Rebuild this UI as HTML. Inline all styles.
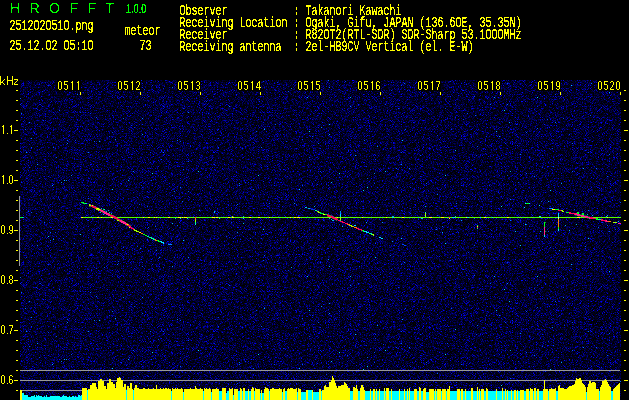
<!DOCTYPE html>
<html><head><meta charset="utf-8"><title>HROFFT</title>
<style>
html,body{margin:0;padding:0;background:#000;}
body{width:629px;height:400px;overflow:hidden;position:relative;font-family:"Liberation Mono",monospace;}
.m{position:absolute;font-family:"Liberation Mono",monospace;font-size:10px;line-height:10px;height:10px;white-space:pre;transform-origin:0 0;transform:translate(-0.5px,-1.4px) scaleY(1.48);letter-spacing:0;font-weight:normal;-webkit-text-stroke:0.1px #ff0}
.p{position:absolute;font-family:"Liberation Sans",sans-serif;font-size:12px;line-height:12px;height:12px;white-space:pre;transform-origin:0 0;transform:scaleX(0.82);-webkit-text-stroke:0.3px #ff0}
.h{position:absolute;font-family:"Liberation Sans",sans-serif;color:#0f0;white-space:pre}
span.b{-webkit-text-stroke:0.15px #ff0}
#hdr{position:absolute;left:0;top:0;width:629px;height:60px;filter:url(#thr)}
#sp{position:absolute;left:20px;top:80px;width:601px;height:320px;background:#000;overflow:hidden}
svg{position:absolute;left:0;top:0}
</style></head><body>

<svg width="0" height="0" style="position:absolute"><filter id="thr" x="0" y="0" width="100%" height="100%" color-interpolation-filters="sRGB"><feComponentTransfer><feFuncA type="discrete" tableValues="0 0 0 0 0 0 0 0 0 0 1 1 1 1 1 1 1 1 1 1"/></feComponentTransfer></filter></svg>
<div id="hdr">
<div class="h" style="left:10px;top:0px;font-size:14px;line-height:16px;letter-spacing:9.45px">HROFFT</div>
<div class="h" style="left:126px;top:3px;font-size:12px;line-height:12px;-webkit-text-stroke:0.3px #0f0;transform-origin:0 0;transform:scaleX(0.76)">1.0.0</div>
<div class="m" style="left:10px;top:21px;color:#ff0">2512O2O51O.png</div>
<div class="m" style="left:10px;top:41px;color:#ff0">25.12.O2&nbsp;O5:1O</div>
<div class="m" style="left:125px;top:26px;color:#ff0"><span class="b">m</span>eteor</div>
<div class="m" style="left:140px;top:41px;color:#ff0">73</div>
<div class="m" style="left:180px;top:6px;color:#ff0">Observer&nbsp;&nbsp;&nbsp;&nbsp;&nbsp;&nbsp;&nbsp;&nbsp;&nbsp;&nbsp;&nbsp;:&nbsp;Takanori&nbsp;Ka<span class="b">w</span>achi</div>
<div class="m" style="left:180px;top:18px;color:#ff0">Receiving&nbsp;Location&nbsp;:&nbsp;Ogaki,&nbsp;Gifu,&nbsp;JAPAN&nbsp;(136.6OE,&nbsp;35.35N)</div>
<div class="m" style="left:180px;top:30px;color:#ff0">Receiver&nbsp;&nbsp;&nbsp;&nbsp;&nbsp;&nbsp;&nbsp;&nbsp;&nbsp;&nbsp;&nbsp;:&nbsp;R82OT2(RTL-SDR)&nbsp;SDR-Sharp&nbsp;53.1OOO<span class="b">M</span>Hz</div>
<div class="m" style="left:180px;top:42px;color:#ff0">Receiving&nbsp;antenna&nbsp;&nbsp;:&nbsp;2el-HB9CV&nbsp;Vertical&nbsp;(el.&nbsp;E-<span class="b">W</span>)</div>
</div>
<div id="sp"><svg width="601" height="320" style="position:absolute;left:0;top:0">
<filter id="nz" x="0" y="0" width="100%" height="100%" color-interpolation-filters="sRGB">
<feTurbulence type="fractalNoise" baseFrequency="1.37 1.43" numOctaves="2" seed="7"/>
<feColorMatrix type="matrix" values="0 0 0 0 0  1 0 0 0 0  1 0 0 0 0  0 0 0 0 1"/>
<feComponentTransfer>
<feFuncG type="table" tableValues="0 0 0 0 0 0 0 0 0 0 0 0 0 0 0 0 0 0 0 0 0 0 0 0 0 0 0 0 0 0 0 0 0 0 0 0 0 0 0 0 0.07 0.25 0.42 0.6 0.78 0.85 0.85 0.85 0.85 0.85 0.85 0.85"/>
<feFuncB type="table" tableValues="0 0 0 0 0 0 0 0 0 0 0 0 0 0 0 0 0 0 0 0.01 0.01 0.02 0.04 0.06 0.08 0.11 0.14 0.18 0.22 0.27 0.32 0.38 0.45 0.52 0.61 0.69 0.79 0.89 1 1 1 1 1 1 1 1 1 1 1 1 1 1"/>
</feComponentTransfer>
</filter>
<rect x="0" y="0" width="601" height="320" filter="url(#nz)"/>
</svg></div>
<svg width="629" height="400" viewBox="0 0 629 400" shape-rendering="crispEdges">
<rect x="20" y="370" width="600" height="1" fill="#999"/>
<rect x="20" y="380" width="600" height="1" fill="#999"/>
<rect x="20" y="390" width="62" height="1" fill="#999"/>
<rect x="19" y="196" width="1" height="70" fill="#999"/>
<path fill="#ff0" d="M20 390h2V400h-2zM82 388h5V400h-5zM88 389h2V400h-2zM90 385h2V400h-2zM92 383h4V400h-4zM96 387h1V400h-1zM97 389h1V400h-1zM98 381h2V400h-2zM100 379h2V400h-2zM102 381h2V400h-2zM104 386h2V400h-2zM106 389h1V400h-1zM107 383h2V400h-2zM109 379h2V400h-2zM111 382h2V400h-2zM113 384h2V400h-2zM115 388h1V400h-1zM116 382h1V400h-1zM117 378h2V400h-2zM119 377h1V400h-1zM120 378h1V400h-1zM121 380h2V400h-2zM123 387h1V400h-1zM124 384h2V400h-2zM127 386h2V400h-2zM129 388h1V400h-1zM130 383h2V400h-2zM132 389h1V400h-1zM134 388h1V400h-1zM135 385h2V400h-2zM137 388h2V400h-2zM139 389h4V400h-4zM143 388h2V400h-2zM145 389h3V400h-3zM148 388h1V400h-1zM149 389h4V400h-4zM153 388h1V400h-1zM154 389h2V400h-2zM156 385h1V400h-1zM157 389h3V400h-3zM160 388h1V400h-1zM161 389h2V400h-2zM163 388h1V400h-1zM164 389h1V400h-1zM165 388h2V400h-2zM167 389h1V400h-1zM168 388h1V400h-1zM169 389h2V400h-2zM172 388h1V400h-1zM173 389h2V400h-2zM175 388h1V400h-1zM176 389h1V400h-1zM177 388h1V400h-1zM178 389h3V400h-3zM181 388h1V400h-1zM182 389h1V400h-1zM184 389h6V400h-6zM190 388h1V400h-1zM191 389h4V400h-4zM195 386h1V400h-1zM196 388h1V400h-1zM197 389h3V400h-3zM200 388h1V400h-1zM201 389h2V400h-2zM204 388h1V400h-1zM205 389h1V400h-1zM206 388h1V400h-1zM207 389h2V400h-2zM209 388h1V400h-1zM210 389h1V400h-1zM212 389h4V400h-4zM216 388h1V400h-1zM217 389h2V400h-2zM222 388h4V400h-4zM229 388h1V400h-1zM230 389h2V400h-2zM232 388h1V400h-1zM234 389h4V400h-4zM240 388h1V400h-1zM241 389h1V400h-1zM243 388h2V400h-2zM248 389h1V400h-1zM251 389h1V400h-1zM252 387h1V400h-1zM253 388h1V400h-1zM255 388h1V400h-1zM256 389h4V400h-4zM261 390h1V400h-1zM264 389h1V400h-1zM265 387h1V400h-1zM266 388h2V400h-2zM268 389h1V400h-1zM270 389h2V400h-2zM272 388h2V400h-2zM274 389h5V400h-5zM279 388h1V400h-1zM280 389h2V400h-2zM283 389h1V400h-1zM284 388h1V400h-1zM287 389h1V400h-1zM288 388h1V400h-1zM289 389h1V400h-1zM290 388h3V400h-3zM293 389h3V400h-3zM296 388h1V400h-1zM298 388h1V400h-1zM299 389h2V400h-2zM306 390h2V400h-2zM312 390h1V400h-1zM319 389h2V400h-2zM322 390h2V400h-2zM324 386h1V400h-1zM325 385h1V400h-1zM326 387h3V400h-3zM329 382h2V400h-2zM331 380h1V400h-1zM332 376h1V400h-1zM333 378h1V400h-1zM334 380h1V400h-1zM335 383h1V400h-1zM336 386h1V400h-1zM337 388h1V400h-1zM338 386h3V400h-3zM341 385h3V400h-3zM344 382h1V400h-1zM345 383h1V400h-1zM346 384h1V400h-1zM347 386h1V400h-1zM348 388h2V400h-2zM353 387h2V400h-2zM355 388h1V400h-1zM356 385h1V400h-1zM357 389h1V400h-1zM360 388h1V400h-1zM361 385h2V400h-2zM363 387h1V400h-1zM364 390h1V400h-1zM370 389h1V400h-1zM373 389h2V400h-2zM376 389h1V400h-1zM379 389h1V400h-1zM384 388h1V400h-1zM386 388h3V400h-3zM391 389h1V400h-1zM399 389h1V400h-1zM404 389h1V400h-1zM407 389h1V400h-1zM409 388h1V400h-1zM414 389h3V400h-3zM419 387h1V400h-1zM420 388h1V400h-1zM423 389h1V400h-1zM424 388h2V400h-2zM429 389h5V400h-5zM435 389h1V400h-1zM437 389h4V400h-4zM442 389h4V400h-4zM447 389h2V400h-2zM449 386h1V400h-1zM457 389h3V400h-3zM461 389h2V400h-2zM465 389h1V400h-1zM471 388h2V400h-2zM477 387h1V400h-1zM479 389h1V400h-1zM481 389h3V400h-3zM486 388h1V400h-1zM487 389h1V400h-1zM496 389h1V400h-1zM502 388h1V400h-1zM505 389h1V400h-1zM507 390h1V400h-1zM511 390h1V400h-1zM514 390h2V400h-2zM517 390h1V400h-1zM520 390h4V400h-4zM526 389h3V400h-3zM530 388h1V400h-1zM531 389h2V400h-2zM534 388h2V400h-2zM537 389h2V400h-2zM543 389h1V400h-1zM544 380h1V400h-1zM545 389h3V400h-3zM549 389h2V400h-2zM551 388h1V400h-1zM552 389h3V400h-3zM555 388h1V400h-1zM558 386h1V400h-1zM559 385h1V400h-1zM560 388h4V400h-4zM564 389h3V400h-3zM567 388h1V400h-1zM568 387h1V400h-1zM569 386h3V400h-3zM572 385h2V400h-2zM574 384h1V400h-1zM575 381h1V400h-1zM576 378h1V400h-1zM577 379h2V400h-2zM579 378h2V400h-2zM581 380h1V400h-1zM582 383h1V400h-1zM583 384h1V400h-1zM584 385h1V400h-1zM585 387h1V400h-1zM587 387h1V400h-1zM588 384h1V400h-1zM589 381h2V400h-2zM591 383h1V400h-1zM592 382h3V400h-3zM595 383h1V400h-1zM596 389h3V400h-3zM600 387h1V400h-1zM601 385h1V400h-1zM602 381h2V400h-2zM604 380h1V400h-1zM605 379h1V400h-1zM606 380h1V400h-1zM607 382h1V400h-1zM608 384h1V400h-1zM609 386h1V400h-1zM610 387h1V400h-1zM613 389h1V400h-1zM614 388h1V400h-1zM615 387h1V400h-1zM616 386h1V400h-1zM617 385h1V400h-1zM618 384h1V400h-1zM619 383h1V400h-1z"/>
<path fill="#0ff" d="M22 393h2V400h-2zM24 395h4V400h-4zM28 397h3V400h-3zM31 396h3V400h-3zM34 395h1V400h-1zM35 397h1V400h-1zM36 395h1V400h-1zM37 396h1V400h-1zM38 395h1V400h-1zM39 396h3V400h-3zM42 397h2V400h-2zM44 396h1V400h-1zM45 397h1V400h-1zM46 395h1V400h-1zM47 397h3V400h-3zM50 396h10V400h-10zM60 397h2V400h-2zM62 396h1V400h-1zM63 395h1V400h-1zM64 396h3V400h-3zM67 397h2V400h-2zM69 396h1V400h-1zM70 397h2V400h-2zM72 396h2V400h-2zM74 397h1V400h-1zM75 396h1V400h-1zM76 397h2V400h-2zM78 395h2V400h-2zM80 396h1V400h-1zM81 395h1V400h-1zM87 390h1V400h-1zM126 390h1V400h-1zM133 390h1V400h-1zM171 391h1V400h-1zM183 392h1V400h-1zM203 391h1V400h-1zM211 392h1V400h-1zM219 391h3V400h-3zM226 393h1V400h-1zM227 391h2V400h-2zM233 395h1V400h-1zM238 391h2V400h-2zM242 391h1V400h-1zM245 391h3V400h-3zM249 391h2V400h-2zM254 391h1V400h-1zM260 393h1V400h-1zM262 393h2V400h-2zM269 391h1V400h-1zM282 392h1V400h-1zM285 391h2V400h-2zM297 392h1V400h-1zM301 392h5V400h-5zM308 390h4V400h-4zM313 392h6V400h-6zM321 391h1V400h-1zM350 391h3V400h-3zM358 391h2V400h-2zM365 391h5V400h-5zM371 391h2V400h-2zM375 391h1V400h-1zM377 391h2V400h-2zM380 391h4V400h-4zM385 391h1V400h-1zM389 391h2V400h-2zM392 391h7V400h-7zM400 391h4V400h-4zM405 391h2V400h-2zM408 391h1V400h-1zM410 391h4V400h-4zM417 391h2V400h-2zM421 391h2V400h-2zM426 392h3V400h-3zM434 391h1V400h-1zM436 391h1V400h-1zM441 391h1V400h-1zM446 391h1V400h-1zM450 391h7V400h-7zM460 391h1V400h-1zM463 391h2V400h-2zM466 391h5V400h-5zM473 391h4V400h-4zM478 391h1V400h-1zM480 391h1V400h-1zM484 391h2V400h-2zM488 391h8V400h-8zM497 391h5V400h-5zM503 391h2V400h-2zM506 391h1V400h-1zM508 391h3V400h-3zM512 391h2V400h-2zM516 391h1V400h-1zM518 391h2V400h-2zM524 391h2V400h-2zM529 391h1V400h-1zM533 391h1V400h-1zM536 391h1V400h-1zM539 391h4V400h-4zM548 391h1V400h-1zM556 391h2V400h-2zM586 392h1V400h-1zM599 391h1V400h-1zM611 391h2V400h-2z"/>
<rect x="81" y="217" width="540" height="1" fill="#58ff00"/>
<rect x="97" y="217" width="2" height="1" fill="#ffff00"/>
<rect x="101" y="217" width="1" height="1" fill="#ffff00"/>
<rect x="111" y="217" width="2" height="1" fill="#ffff00"/>
<rect x="134" y="217" width="1" height="1" fill="#30ff10"/>
<rect x="138" y="217" width="2" height="1" fill="#30ff10"/>
<rect x="143" y="217" width="1" height="1" fill="#ffff00"/>
<rect x="148" y="217" width="2" height="1" fill="#ffff00"/>
<rect x="154" y="217" width="1" height="1" fill="#ffff00"/>
<rect x="156" y="217" width="1" height="1" fill="#ffff00"/>
<rect x="161" y="217" width="3" height="1" fill="#30ff10"/>
<rect x="168" y="217" width="2" height="1" fill="#ffff00"/>
<rect x="173" y="217" width="2" height="1" fill="#30ff10"/>
<rect x="178" y="217" width="3" height="1" fill="#ffff00"/>
<rect x="182" y="217" width="1" height="1" fill="#ffff00"/>
<rect x="184" y="217" width="3" height="1" fill="#ffff00"/>
<rect x="206" y="217" width="2" height="1" fill="#30ff10"/>
<rect x="209" y="217" width="2" height="1" fill="#30ff10"/>
<rect x="212" y="217" width="3" height="1" fill="#ffff00"/>
<rect x="216" y="217" width="2" height="1" fill="#ffff00"/>
<rect x="220" y="217" width="1" height="1" fill="#30ff10"/>
<rect x="228" y="217" width="2" height="1" fill="#ffff00"/>
<rect x="232" y="217" width="2" height="1" fill="#ffff00"/>
<rect x="249" y="217" width="2" height="1" fill="#ffff00"/>
<rect x="258" y="217" width="2" height="1" fill="#ffff00"/>
<rect x="269" y="217" width="1" height="1" fill="#ffff00"/>
<rect x="281" y="217" width="3" height="1" fill="#30ff10"/>
<rect x="290" y="217" width="1" height="1" fill="#ffff00"/>
<rect x="294" y="217" width="2" height="1" fill="#ffff00"/>
<rect x="297" y="217" width="3" height="1" fill="#ffff00"/>
<rect x="304" y="217" width="1" height="1" fill="#30ff10"/>
<rect x="307" y="217" width="2" height="1" fill="#30ff10"/>
<rect x="310" y="217" width="3" height="1" fill="#30ff10"/>
<rect x="332" y="217" width="2" height="1" fill="#ffff00"/>
<rect x="337" y="217" width="1" height="1" fill="#ffff00"/>
<rect x="347" y="217" width="3" height="1" fill="#30ff10"/>
<rect x="360" y="217" width="1" height="1" fill="#30ff10"/>
<rect x="362" y="217" width="1" height="1" fill="#ffff00"/>
<rect x="381" y="217" width="1" height="1" fill="#30ff10"/>
<rect x="386" y="217" width="1" height="1" fill="#ffff00"/>
<rect x="402" y="217" width="2" height="1" fill="#ffff00"/>
<rect x="417" y="217" width="2" height="1" fill="#30ff10"/>
<rect x="425" y="217" width="2" height="1" fill="#30ff10"/>
<rect x="429" y="217" width="3" height="1" fill="#ffff00"/>
<rect x="441" y="217" width="3" height="1" fill="#ffff00"/>
<rect x="466" y="217" width="1" height="1" fill="#ffff00"/>
<rect x="484" y="217" width="2" height="1" fill="#ffff00"/>
<rect x="490" y="217" width="2" height="1" fill="#30ff10"/>
<rect x="499" y="217" width="1" height="1" fill="#30ff10"/>
<rect x="507" y="217" width="2" height="1" fill="#ffff00"/>
<rect x="511" y="217" width="2" height="1" fill="#30ff10"/>
<rect x="514" y="217" width="3" height="1" fill="#30ff10"/>
<rect x="522" y="217" width="2" height="1" fill="#30ff10"/>
<rect x="528" y="217" width="2" height="1" fill="#30ff10"/>
<rect x="534" y="217" width="3" height="1" fill="#30ff10"/>
<rect x="552" y="217" width="3" height="1" fill="#30ff10"/>
<rect x="577" y="217" width="3" height="1" fill="#ffff00"/>
<rect x="587" y="217" width="2" height="1" fill="#30ff10"/>
<rect x="607" y="217" width="1" height="1" fill="#ffff00"/>
<rect x="81" y="217" width="2" height="1" fill="#ffff00"/>
<path d="M81.0 202.5 L84.0 203.0 L86.0 203.6" stroke="#00ff20" stroke-width="1.2" fill="none"/>
<rect x="85" y="203" width="2" height="1" fill="#00ff90"/>
<path d="M89.0 205.0 L93.0 206.5 L98.0 209.0 L103.0 211.5 L107.5 214.0 L112.0 216.0 L117.0 218.5 L121.0 221.0 L125.5 223.5 L130.5 226.8" stroke="#a0ff00" stroke-width="2.6" stroke-opacity="0.4" fill="none"/>
<path d="M89.0 205.0 L93.0 206.5 L98.0 209.0 L103.0 211.5 L107.5 214.0 L112.0 216.0 L117.0 218.5 L121.0 221.0 L125.5 223.5 L130.5 226.8" stroke="#ff0058" stroke-width="1.5" fill="none"/>
<path d="M100.0 210.0 L103.0 211.5 L107.5 214.0 L110.0 215.1" stroke="#ff2090" stroke-width="2.2" fill="none"/>
<path d="M120.0 220.5 L121.0 221.0 L125.5 223.5 L126.5 224.2" stroke="#ff2090" stroke-width="2.2" fill="none"/>
<path d="M96.0 208.7 L99.0 210.2" stroke="#a0ff00" stroke-width="1.0" fill="none"/>
<path d="M97.5 208.2 L100.0 209.4" stroke="#ffff00" stroke-width="1.0" fill="none"/>
<path d="M89.0 204.8 L91.0 205.6" stroke="#a0ff00" stroke-width="1.2" fill="none"/>
<rect x="103" y="209" width="2" height="1" fill="#00ff20"/>
<rect x="92" y="205" width="1" height="1" fill="#ffff00"/>
<path d="M117.0 220.0 L119.5 221.4" stroke="#a0ff00" stroke-width="1.0" fill="none"/>
<path d="M126.5 224.0 L128.5 225.2" stroke="#ff8000" stroke-width="1.3" fill="none"/>
<rect x="127" y="224" width="1" height="1" fill="#ffff00"/>
<rect x="129" y="227" width="1" height="1" fill="#ffff00"/>
<path d="M130.5 226.8 L133.8 229.5" stroke="#ff0058" stroke-width="1.4" fill="none"/>
<rect x="135" y="230" width="1" height="1" fill="#00e0ff"/>
<path d="M134.0 229.8 L135.5 230.5 L138.5 231.7" stroke="#a0ff00" stroke-width="1.2" fill="none"/>
<path d="M138.5 231.7 L141.0 233.0" stroke="#ffff00" stroke-width="1.2" fill="none"/>
<path d="M141.0 233.0 L143.5 234.3" stroke="#ff8000" stroke-width="1.2" fill="none"/>
<path d="M143.5 234.3 L147.0 236.0" stroke="#00ff20" stroke-width="1.2" fill="none"/>
<path d="M147.0 236.0 L152.0 238.4 L155.0 239.7" stroke="#00ff90" stroke-width="1.2" fill="none"/>
<path d="M155.0 239.7 L157.0 240.5" stroke="#ff8000" stroke-width="1.2" fill="none"/>
<path d="M157.0 240.5 L160.4 241.4" stroke="#00ff20" stroke-width="1.2" fill="none"/>
<path d="M160.4 241.4 L164.5 243.3" stroke="#00e0ff" stroke-width="1.2" fill="none"/>
<path d="M168.0 244.5 L172.0 244.6" stroke="#0088ff" stroke-width="1.0" fill="none"/>
<rect x="101" y="208" width="1" height="1" fill="#00e0ff" fill-opacity="0.8"/>
<rect x="104" y="209" width="1" height="1" fill="#00e0ff" fill-opacity="0.8"/>
<rect x="106" y="211" width="1" height="1" fill="#00e0ff" fill-opacity="0.8"/>
<rect x="108" y="210" width="1" height="1" fill="#00e0ff" fill-opacity="0.8"/>
<rect x="109" y="212" width="1" height="1" fill="#00e0ff" fill-opacity="0.8"/>
<rect x="100" y="212" width="1" height="1" fill="#00e0ff" fill-opacity="0.8"/>
<rect x="103" y="214" width="1" height="1" fill="#00e0ff" fill-opacity="0.8"/>
<rect x="111" y="213" width="1" height="1" fill="#00e0ff" fill-opacity="0.8"/>
<rect x="294" y="203" width="1" height="1" fill="#0088ff"/>
<rect x="305" y="207" width="2" height="1" fill="#00e0ff" fill-opacity="0.9"/>
<rect x="308" y="208" width="2" height="1" fill="#00e0ff" fill-opacity="0.8"/>
<path d="M310.0 208.7 L314.6 209.8" stroke="#0040ff" stroke-width="1.0" stroke-opacity="0.8" fill="none"/>
<path d="M314.6 209.8 L317.5 211.2" stroke="#00ff90" stroke-width="1.2" fill="none"/>
<path d="M317.5 211.2 L320.0 212.9" stroke="#a0ff00" stroke-width="1.2" fill="none"/>
<path d="M320.0 212.9 L324.2 214.1 L327.0 215.0" stroke="#00ff20" stroke-width="1.2" fill="none"/>
<path d="M323.0 213.9 L325.0 214.4" stroke="#ffff00" stroke-width="1.0" fill="none"/>
<path d="M327.0 215.0 L330.8 216.6 L333.7 218.0 L337.5 219.7" stroke="#a0ff00" stroke-width="2.8" stroke-opacity="0.4" fill="none"/>
<path d="M327.0 215.0 L330.8 216.6 L333.7 218.0 L337.5 219.7" stroke="#ff0058" stroke-width="1.7" fill="none"/>
<path d="M337.5 219.7 L342.4 222.0 L347.5 224.0" stroke="#ff0058" stroke-width="1.2" fill="none"/>
<path d="M347.5 224.0 L349.5 225.0" stroke="#ff8000" stroke-width="1.2" fill="none"/>
<path d="M349.5 225.0 L353.0 226.6" stroke="#a0ff00" stroke-width="1.2" fill="none"/>
<rect x="354" y="225" width="2" height="1" fill="#00e0ff"/>
<path d="M353.0 226.6 L356.4 227.9" stroke="#ff8000" stroke-width="1.2" fill="none"/>
<path d="M356.4 227.9 L361.8 230.3" stroke="#ff0058" stroke-width="1.3" fill="none"/>
<path d="M361.8 230.3 L364.5 231.4" stroke="#00ff20" stroke-width="1.2" fill="none"/>
<path d="M364.5 231.4 L369.0 233.0" stroke="#00e0ff" stroke-width="1.2" fill="none"/>
<path d="M369.0 233.0 L372.0 234.3" stroke="#00ff90" stroke-width="1.2" fill="none"/>
<path d="M372.0 234.3 L374.5 235.3" stroke="#a0ff00" stroke-width="1.2" fill="none"/>
<path d="M379.0 237.4 L382.6 238.3" stroke="#00e0ff" stroke-width="1.0" fill="none"/>
<rect x="392" y="241" width="1" height="1" fill="#0088ff"/>
<path d="M402.0 244.4 L406.0 245.4" stroke="#0040ff" stroke-width="1.0" fill="none"/>
<rect x="331" y="219" width="1" height="1" fill="#00e0ff" fill-opacity="0.8"/>
<rect x="332" y="220" width="1" height="1" fill="#00e0ff" fill-opacity="0.8"/>
<rect x="333" y="220" width="1" height="1" fill="#00e0ff" fill-opacity="0.8"/>
<rect x="329" y="218" width="1" height="1" fill="#00e0ff" fill-opacity="0.8"/>
<rect x="340" y="211" width="1" height="3" fill="#0088ff"/>
<rect x="340" y="214" width="1" height="3" fill="#00e0ff"/>
<rect x="340" y="217" width="1" height="3" fill="#a0ff00"/>
<rect x="340" y="220" width="1" height="1" fill="#00ff90"/>
<rect x="392" y="216" width="2" height="2" fill="#00e0ff" fill-opacity="0.8"/>
<rect x="525" y="203" width="1" height="1" fill="#00e0ff"/>
<rect x="526" y="203" width="3" height="1" fill="#00ff20"/>
<rect x="529" y="203" width="1" height="1" fill="#00e0ff"/>
<rect x="524" y="207" width="1" height="1" fill="#00e0ff"/>
<rect x="539" y="205" width="1" height="1" fill="#00e0ff"/>
<rect x="525" y="224" width="1" height="1" fill="#00e0ff"/>
<rect x="539" y="216" width="2" height="1" fill="#00e0ff"/>
<path d="M549.4 208.4 L552.5 208.7" stroke="#0088ff" stroke-width="1.0" fill="none"/>
<path d="M552.5 208.9 L555.0 209.5" stroke="#ffff00" stroke-width="1.2" fill="none"/>
<path d="M555.0 209.5 L558.5 210.0" stroke="#00ff20" stroke-width="1.2" fill="none"/>
<path d="M558.5 210.0 L561.0 210.6" stroke="#ff0058" stroke-width="1.3" fill="none"/>
<path d="M561.0 210.6 L564.0 211.3" stroke="#a0ff00" stroke-width="1.2" fill="none"/>
<path d="M566.0 212.2 L569.0 212.8" stroke="#00ff20" stroke-width="1.2" fill="none"/>
<path d="M575.5 214.1 L578.4 215.0 L582.2 216.0 L586.0 216.8 L589.9 217.8" stroke="#00ff20" stroke-width="3.0" stroke-opacity="0.4" fill="none"/>
<path d="M569.0 212.8 L571.7 213.2 L575.5 214.1" stroke="#ff0058" stroke-width="1.3" fill="none"/>
<path d="M575.5 214.1 L578.4 215.0 L582.2 216.0 L586.0 216.8 L589.9 217.8" stroke="#ff2090" stroke-width="1.8" fill="none"/>
<path d="M589.9 217.8 L593.7 218.4 L595.5 218.8" stroke="#ff0058" stroke-width="1.4" fill="none"/>
<path d="M595.5 218.8 L598.0 219.2" stroke="#00ff20" stroke-width="1.3" fill="none"/>
<path d="M598.0 219.2 L601.0 219.8" stroke="#00ff90" stroke-width="1.3" fill="none"/>
<path d="M601.0 219.8 L606.0 221.0" stroke="#ff0058" stroke-width="1.5" fill="none"/>
<path d="M606.0 221.0 L608.5 221.4" stroke="#ff2090" stroke-width="1.3" fill="none"/>
<path d="M608.5 221.4 L611.0 221.8" stroke="#ff8000" stroke-width="1.2" fill="none"/>
<path d="M613.5 222.3 L616.8 222.8" stroke="#a0ff00" stroke-width="1.3" fill="none"/>
<path d="M618.0 223.5 L621.0 223.7" stroke="#ff2090" stroke-width="1.3" fill="none"/>
<rect x="577" y="212" width="1" height="1" fill="#00e0ff" fill-opacity="0.85"/>
<rect x="578" y="213" width="1" height="1" fill="#00e0ff" fill-opacity="0.85"/>
<rect x="582" y="213" width="1" height="1" fill="#00e0ff" fill-opacity="0.85"/>
<rect x="583" y="214" width="1" height="1" fill="#00e0ff" fill-opacity="0.85"/>
<rect x="606" y="216" width="1" height="1" fill="#00e0ff" fill-opacity="0.85"/>
<rect x="607" y="215" width="1" height="1" fill="#00e0ff" fill-opacity="0.85"/>
<rect x="618" y="221" width="1" height="1" fill="#00e0ff" fill-opacity="0.85"/>
<rect x="592" y="215" width="1" height="1" fill="#00e0ff" fill-opacity="0.85"/>
<rect x="587" y="214" width="1" height="1" fill="#00e0ff" fill-opacity="0.85"/>
<rect x="577" y="212" width="2" height="2" fill="#00ff20"/>
<rect x="582" y="213" width="2" height="2" fill="#00ff20"/>
<rect x="540" y="231" width="1" height="1" fill="#00e0ff" fill-opacity="0.8"/>
<rect x="565" y="225" width="1" height="1" fill="#00e0ff" fill-opacity="0.8"/>
<rect x="569" y="230" width="1" height="1" fill="#00e0ff" fill-opacity="0.8"/>
<rect x="576" y="224" width="1" height="1" fill="#00e0ff" fill-opacity="0.8"/>
<rect x="544" y="222" width="1" height="5" fill="#00ff20"/>
<rect x="544" y="227" width="1" height="8" fill="#ff2090"/>
<rect x="544" y="235" width="1" height="2" fill="#00e0ff"/>
<rect x="545" y="222" width="1" height="1" fill="#00ff20" fill-opacity="0.7"/>
<rect x="545" y="231" width="1" height="1" fill="#00ff20" fill-opacity="0.7"/>
<rect x="558" y="213" width="1" height="4" fill="#00e0ff"/>
<rect x="558" y="217" width="1" height="2" fill="#c0ffc0"/>
<rect x="558" y="219" width="1" height="8" fill="#ff8000"/>
<rect x="558" y="227" width="1" height="2" fill="#00ff20"/>
<rect x="558" y="229" width="1" height="2" fill="#00e0ff"/>
<rect x="195" y="217" width="1" height="1" fill="#ff0058"/>
<rect x="195" y="218" width="1" height="2" fill="#ff8000"/>
<rect x="195" y="220" width="1" height="2" fill="#a0ff00"/>
<rect x="195" y="222" width="1" height="2" fill="#00ff90"/>
<rect x="195" y="224" width="1" height="1" fill="#00e0ff"/>
<rect x="214" y="211" width="1" height="1" fill="#00e0ff" fill-opacity="0.85"/>
<rect x="214" y="212" width="1" height="1" fill="#00e0ff" fill-opacity="0.85"/>
<rect x="199" y="210" width="1" height="1" fill="#00e0ff" fill-opacity="0.85"/>
<rect x="175" y="218" width="1" height="1" fill="#00e0ff" fill-opacity="0.85"/>
<rect x="180" y="218" width="1" height="1" fill="#00e0ff" fill-opacity="0.85"/>
<rect x="187" y="218" width="1" height="1" fill="#00e0ff" fill-opacity="0.85"/>
<rect x="219" y="218" width="1" height="1" fill="#00e0ff" fill-opacity="0.85"/>
<rect x="243" y="216" width="1" height="1" fill="#00e0ff" fill-opacity="0.85"/>
<rect x="243" y="218" width="1" height="1" fill="#00e0ff" fill-opacity="0.85"/>
<rect x="172" y="223" width="1" height="1" fill="#00e0ff" fill-opacity="0.85"/>
<rect x="243" y="223" width="1" height="1" fill="#00e0ff" fill-opacity="0.85"/>
<rect x="232" y="216" width="1" height="1" fill="#a0ff00"/>
<rect x="425" y="212" width="1" height="1" fill="#00e0ff"/>
<rect x="425" y="213" width="1" height="4" fill="#a0ff00"/>
<rect x="425" y="206" width="1" height="1" fill="#00e0ff" fill-opacity="0.8"/>
<rect x="449" y="217" width="1" height="1" fill="#ff0058"/>
<rect x="449" y="218" width="1" height="1" fill="#ffff00"/>
<rect x="477" y="225" width="1" height="1" fill="#00ff20"/>
<rect x="477" y="226" width="1" height="1" fill="#ffff00"/>
<rect x="477" y="227" width="1" height="1" fill="#ff0058"/>
<rect x="477" y="228" width="1" height="1" fill="#00ff90"/>
<rect x="452" y="217" width="3" height="1" fill="#00e0ff" fill-opacity="0.85"/>
<rect x="467" y="217" width="2" height="1" fill="#00e0ff" fill-opacity="0.85"/>
<rect x="480" y="217" width="1" height="1" fill="#00e0ff" fill-opacity="0.85"/>
<rect x="492" y="217" width="1" height="1" fill="#00e0ff" fill-opacity="0.85"/>
<rect x="421" y="218" width="2" height="1" fill="#00e0ff" fill-opacity="0.85"/>
<rect x="455" y="216" width="1" height="1" fill="#00e0ff" fill-opacity="0.85"/>
<rect x="20" y="217" width="2" height="1" fill="#00ff20"/>
<rect x="22" y="217" width="1" height="1" fill="#00ff90"/>
<rect x="23" y="217" width="1" height="1" fill="#0088ff"/>
<rect x="16" y="90" width="2" height="1" fill="#ff0"/>
<rect x="624" y="90" width="2" height="1" fill="#ff0"/>
<rect x="16" y="100" width="2" height="1" fill="#ff0"/>
<rect x="624" y="100" width="2" height="1" fill="#ff0"/>
<rect x="16" y="110" width="2" height="1" fill="#ff0"/>
<rect x="624" y="110" width="2" height="1" fill="#ff0"/>
<rect x="16" y="120" width="2" height="1" fill="#ff0"/>
<rect x="624" y="120" width="2" height="1" fill="#ff0"/>
<rect x="14" y="130" width="4" height="1" fill="#ff0"/>
<rect x="624" y="130" width="4" height="1" fill="#ff0"/>
<rect x="16" y="140" width="2" height="1" fill="#ff0"/>
<rect x="624" y="140" width="2" height="1" fill="#ff0"/>
<rect x="16" y="150" width="2" height="1" fill="#ff0"/>
<rect x="624" y="150" width="2" height="1" fill="#ff0"/>
<rect x="16" y="160" width="2" height="1" fill="#ff0"/>
<rect x="624" y="160" width="2" height="1" fill="#ff0"/>
<rect x="16" y="170" width="2" height="1" fill="#ff0"/>
<rect x="624" y="170" width="2" height="1" fill="#ff0"/>
<rect x="14" y="180" width="4" height="1" fill="#ff0"/>
<rect x="624" y="180" width="4" height="1" fill="#ff0"/>
<rect x="16" y="190" width="2" height="1" fill="#ff0"/>
<rect x="624" y="190" width="2" height="1" fill="#ff0"/>
<rect x="16" y="200" width="2" height="1" fill="#ff0"/>
<rect x="624" y="200" width="2" height="1" fill="#ff0"/>
<rect x="16" y="210" width="2" height="1" fill="#ff0"/>
<rect x="624" y="210" width="2" height="1" fill="#ff0"/>
<rect x="16" y="220" width="2" height="1" fill="#ff0"/>
<rect x="624" y="220" width="2" height="1" fill="#ff0"/>
<rect x="14" y="230" width="4" height="1" fill="#ff0"/>
<rect x="624" y="230" width="4" height="1" fill="#ff0"/>
<rect x="16" y="240" width="2" height="1" fill="#ff0"/>
<rect x="624" y="240" width="2" height="1" fill="#ff0"/>
<rect x="16" y="250" width="2" height="1" fill="#ff0"/>
<rect x="624" y="250" width="2" height="1" fill="#ff0"/>
<rect x="16" y="260" width="2" height="1" fill="#ff0"/>
<rect x="624" y="260" width="2" height="1" fill="#ff0"/>
<rect x="16" y="270" width="2" height="1" fill="#ff0"/>
<rect x="624" y="270" width="2" height="1" fill="#ff0"/>
<rect x="14" y="280" width="4" height="1" fill="#ff0"/>
<rect x="624" y="280" width="4" height="1" fill="#ff0"/>
<rect x="16" y="290" width="2" height="1" fill="#ff0"/>
<rect x="624" y="290" width="2" height="1" fill="#ff0"/>
<rect x="16" y="300" width="2" height="1" fill="#ff0"/>
<rect x="624" y="300" width="2" height="1" fill="#ff0"/>
<rect x="16" y="310" width="2" height="1" fill="#ff0"/>
<rect x="624" y="310" width="2" height="1" fill="#ff0"/>
<rect x="16" y="320" width="2" height="1" fill="#ff0"/>
<rect x="624" y="320" width="2" height="1" fill="#ff0"/>
<rect x="14" y="330" width="4" height="1" fill="#ff0"/>
<rect x="624" y="330" width="4" height="1" fill="#ff0"/>
<rect x="16" y="340" width="2" height="1" fill="#ff0"/>
<rect x="624" y="340" width="2" height="1" fill="#ff0"/>
<rect x="16" y="350" width="2" height="1" fill="#ff0"/>
<rect x="624" y="350" width="2" height="1" fill="#ff0"/>
<rect x="16" y="360" width="2" height="1" fill="#ff0"/>
<rect x="624" y="360" width="2" height="1" fill="#ff0"/>
<rect x="16" y="370" width="2" height="1" fill="#ff0"/>
<rect x="624" y="370" width="2" height="1" fill="#ff0"/>
<rect x="14" y="380" width="4" height="1" fill="#ff0"/>
<rect x="624" y="380" width="4" height="1" fill="#ff0"/>
<rect x="16" y="390" width="2" height="1" fill="#ff0"/>
<rect x="624" y="390" width="2" height="1" fill="#ff0"/>
<rect x="16" y="400" width="2" height="1" fill="#ff0"/>
<rect x="624" y="400" width="2" height="1" fill="#ff0"/>
<rect x="80" y="92" width="1" height="3" fill="#ff0"/>
<rect x="140" y="92" width="1" height="3" fill="#ff0"/>
<rect x="200" y="92" width="1" height="3" fill="#ff0"/>
<rect x="260" y="92" width="1" height="3" fill="#ff0"/>
<rect x="320" y="92" width="1" height="3" fill="#ff0"/>
<rect x="380" y="92" width="1" height="3" fill="#ff0"/>
<rect x="440" y="92" width="1" height="3" fill="#ff0"/>
<rect x="500" y="92" width="1" height="3" fill="#ff0"/>
<rect x="560" y="92" width="1" height="3" fill="#ff0"/>
<rect x="620" y="92" width="1" height="3" fill="#ff0"/>
<rect x="57" y="80" width="24" height="11" fill="#000"/>
<rect x="117" y="80" width="24" height="11" fill="#000"/>
<rect x="177" y="80" width="24" height="11" fill="#000"/>
<rect x="237" y="80" width="24" height="11" fill="#000"/>
<rect x="297" y="80" width="24" height="11" fill="#000"/>
<rect x="357" y="80" width="24" height="11" fill="#000"/>
<rect x="417" y="80" width="24" height="11" fill="#000"/>
<rect x="477" y="80" width="24" height="11" fill="#000"/>
<rect x="537" y="80" width="24" height="11" fill="#000"/>
<rect x="597" y="80" width="24" height="11" fill="#000"/>
<path fill="#ff0" d="M59 81h2v1h-2zM58 82h1v1h-1zM61 82h1v1h-1zM58 83h1v1h-1zM61 83h1v1h-1zM58 84h1v1h-1zM61 84h1v1h-1zM58 85h1v1h-1zM61 85h1v1h-1zM58 86h1v1h-1zM61 86h1v1h-1zM58 87h1v1h-1zM61 87h1v1h-1zM58 88h1v1h-1zM61 88h1v1h-1zM59 89h2v1h-2zM64 81h4v1h-4zM64 82h1v1h-1zM64 83h1v1h-1zM64 84h3v1h-3zM67 85h1v1h-1zM67 86h1v1h-1zM67 87h1v1h-1zM64 88h1v1h-1zM67 88h1v1h-1zM65 89h2v1h-2zM72 81h1v1h-1zM71 82h2v1h-2zM72 83h1v1h-1zM72 84h1v1h-1zM72 85h1v1h-1zM72 86h1v1h-1zM72 87h1v1h-1zM72 88h1v1h-1zM72 89h1v1h-1zM78 81h1v1h-1zM77 82h2v1h-2zM78 83h1v1h-1zM78 84h1v1h-1zM78 85h1v1h-1zM78 86h1v1h-1zM78 87h1v1h-1zM78 88h1v1h-1zM78 89h1v1h-1zM119 81h2v1h-2zM118 82h1v1h-1zM121 82h1v1h-1zM118 83h1v1h-1zM121 83h1v1h-1zM118 84h1v1h-1zM121 84h1v1h-1zM118 85h1v1h-1zM121 85h1v1h-1zM118 86h1v1h-1zM121 86h1v1h-1zM118 87h1v1h-1zM121 87h1v1h-1zM118 88h1v1h-1zM121 88h1v1h-1zM119 89h2v1h-2zM124 81h4v1h-4zM124 82h1v1h-1zM124 83h1v1h-1zM124 84h3v1h-3zM127 85h1v1h-1zM127 86h1v1h-1zM127 87h1v1h-1zM124 88h1v1h-1zM127 88h1v1h-1zM125 89h2v1h-2zM132 81h1v1h-1zM131 82h2v1h-2zM132 83h1v1h-1zM132 84h1v1h-1zM132 85h1v1h-1zM132 86h1v1h-1zM132 87h1v1h-1zM132 88h1v1h-1zM132 89h1v1h-1zM137 81h2v1h-2zM136 82h1v1h-1zM139 82h1v1h-1zM139 83h1v1h-1zM139 84h1v1h-1zM138 85h1v1h-1zM138 86h1v1h-1zM137 87h1v1h-1zM136 88h1v1h-1zM136 89h4v1h-4zM179 81h2v1h-2zM178 82h1v1h-1zM181 82h1v1h-1zM178 83h1v1h-1zM181 83h1v1h-1zM178 84h1v1h-1zM181 84h1v1h-1zM178 85h1v1h-1zM181 85h1v1h-1zM178 86h1v1h-1zM181 86h1v1h-1zM178 87h1v1h-1zM181 87h1v1h-1zM178 88h1v1h-1zM181 88h1v1h-1zM179 89h2v1h-2zM184 81h4v1h-4zM184 82h1v1h-1zM184 83h1v1h-1zM184 84h3v1h-3zM187 85h1v1h-1zM187 86h1v1h-1zM187 87h1v1h-1zM184 88h1v1h-1zM187 88h1v1h-1zM185 89h2v1h-2zM192 81h1v1h-1zM191 82h2v1h-2zM192 83h1v1h-1zM192 84h1v1h-1zM192 85h1v1h-1zM192 86h1v1h-1zM192 87h1v1h-1zM192 88h1v1h-1zM192 89h1v1h-1zM197 81h2v1h-2zM196 82h1v1h-1zM199 82h1v1h-1zM199 83h1v1h-1zM199 84h1v1h-1zM197 85h2v1h-2zM199 86h1v1h-1zM199 87h1v1h-1zM196 88h1v1h-1zM199 88h1v1h-1zM197 89h2v1h-2zM239 81h2v1h-2zM238 82h1v1h-1zM241 82h1v1h-1zM238 83h1v1h-1zM241 83h1v1h-1zM238 84h1v1h-1zM241 84h1v1h-1zM238 85h1v1h-1zM241 85h1v1h-1zM238 86h1v1h-1zM241 86h1v1h-1zM238 87h1v1h-1zM241 87h1v1h-1zM238 88h1v1h-1zM241 88h1v1h-1zM239 89h2v1h-2zM244 81h4v1h-4zM244 82h1v1h-1zM244 83h1v1h-1zM244 84h3v1h-3zM247 85h1v1h-1zM247 86h1v1h-1zM247 87h1v1h-1zM244 88h1v1h-1zM247 88h1v1h-1zM245 89h2v1h-2zM252 81h1v1h-1zM251 82h2v1h-2zM252 83h1v1h-1zM252 84h1v1h-1zM252 85h1v1h-1zM252 86h1v1h-1zM252 87h1v1h-1zM252 88h1v1h-1zM252 89h1v1h-1zM259 81h1v1h-1zM258 82h2v1h-2zM257 83h1v1h-1zM259 83h1v1h-1zM257 84h1v1h-1zM259 84h1v1h-1zM257 85h1v1h-1zM259 85h1v1h-1zM256 86h1v1h-1zM259 86h1v1h-1zM256 87h5v1h-5zM259 88h1v1h-1zM259 89h1v1h-1zM299 81h2v1h-2zM298 82h1v1h-1zM301 82h1v1h-1zM298 83h1v1h-1zM301 83h1v1h-1zM298 84h1v1h-1zM301 84h1v1h-1zM298 85h1v1h-1zM301 85h1v1h-1zM298 86h1v1h-1zM301 86h1v1h-1zM298 87h1v1h-1zM301 87h1v1h-1zM298 88h1v1h-1zM301 88h1v1h-1zM299 89h2v1h-2zM304 81h4v1h-4zM304 82h1v1h-1zM304 83h1v1h-1zM304 84h3v1h-3zM307 85h1v1h-1zM307 86h1v1h-1zM307 87h1v1h-1zM304 88h1v1h-1zM307 88h1v1h-1zM305 89h2v1h-2zM312 81h1v1h-1zM311 82h2v1h-2zM312 83h1v1h-1zM312 84h1v1h-1zM312 85h1v1h-1zM312 86h1v1h-1zM312 87h1v1h-1zM312 88h1v1h-1zM312 89h1v1h-1zM316 81h4v1h-4zM316 82h1v1h-1zM316 83h1v1h-1zM316 84h3v1h-3zM319 85h1v1h-1zM319 86h1v1h-1zM319 87h1v1h-1zM316 88h1v1h-1zM319 88h1v1h-1zM317 89h2v1h-2zM359 81h2v1h-2zM358 82h1v1h-1zM361 82h1v1h-1zM358 83h1v1h-1zM361 83h1v1h-1zM358 84h1v1h-1zM361 84h1v1h-1zM358 85h1v1h-1zM361 85h1v1h-1zM358 86h1v1h-1zM361 86h1v1h-1zM358 87h1v1h-1zM361 87h1v1h-1zM358 88h1v1h-1zM361 88h1v1h-1zM359 89h2v1h-2zM364 81h4v1h-4zM364 82h1v1h-1zM364 83h1v1h-1zM364 84h3v1h-3zM367 85h1v1h-1zM367 86h1v1h-1zM367 87h1v1h-1zM364 88h1v1h-1zM367 88h1v1h-1zM365 89h2v1h-2zM372 81h1v1h-1zM371 82h2v1h-2zM372 83h1v1h-1zM372 84h1v1h-1zM372 85h1v1h-1zM372 86h1v1h-1zM372 87h1v1h-1zM372 88h1v1h-1zM372 89h1v1h-1zM377 81h2v1h-2zM376 82h1v1h-1zM379 82h1v1h-1zM376 83h1v1h-1zM376 84h1v1h-1zM376 85h3v1h-3zM376 86h1v1h-1zM379 86h1v1h-1zM376 87h1v1h-1zM379 87h1v1h-1zM376 88h1v1h-1zM379 88h1v1h-1zM377 89h2v1h-2zM419 81h2v1h-2zM418 82h1v1h-1zM421 82h1v1h-1zM418 83h1v1h-1zM421 83h1v1h-1zM418 84h1v1h-1zM421 84h1v1h-1zM418 85h1v1h-1zM421 85h1v1h-1zM418 86h1v1h-1zM421 86h1v1h-1zM418 87h1v1h-1zM421 87h1v1h-1zM418 88h1v1h-1zM421 88h1v1h-1zM419 89h2v1h-2zM424 81h4v1h-4zM424 82h1v1h-1zM424 83h1v1h-1zM424 84h3v1h-3zM427 85h1v1h-1zM427 86h1v1h-1zM427 87h1v1h-1zM424 88h1v1h-1zM427 88h1v1h-1zM425 89h2v1h-2zM432 81h1v1h-1zM431 82h2v1h-2zM432 83h1v1h-1zM432 84h1v1h-1zM432 85h1v1h-1zM432 86h1v1h-1zM432 87h1v1h-1zM432 88h1v1h-1zM432 89h1v1h-1zM436 81h4v1h-4zM439 82h1v1h-1zM439 83h1v1h-1zM438 84h1v1h-1zM438 85h1v1h-1zM438 86h1v1h-1zM437 87h1v1h-1zM437 88h1v1h-1zM437 89h1v1h-1zM479 81h2v1h-2zM478 82h1v1h-1zM481 82h1v1h-1zM478 83h1v1h-1zM481 83h1v1h-1zM478 84h1v1h-1zM481 84h1v1h-1zM478 85h1v1h-1zM481 85h1v1h-1zM478 86h1v1h-1zM481 86h1v1h-1zM478 87h1v1h-1zM481 87h1v1h-1zM478 88h1v1h-1zM481 88h1v1h-1zM479 89h2v1h-2zM484 81h4v1h-4zM484 82h1v1h-1zM484 83h1v1h-1zM484 84h3v1h-3zM487 85h1v1h-1zM487 86h1v1h-1zM487 87h1v1h-1zM484 88h1v1h-1zM487 88h1v1h-1zM485 89h2v1h-2zM492 81h1v1h-1zM491 82h2v1h-2zM492 83h1v1h-1zM492 84h1v1h-1zM492 85h1v1h-1zM492 86h1v1h-1zM492 87h1v1h-1zM492 88h1v1h-1zM492 89h1v1h-1zM497 81h2v1h-2zM496 82h1v1h-1zM499 82h1v1h-1zM496 83h1v1h-1zM499 83h1v1h-1zM496 84h1v1h-1zM499 84h1v1h-1zM497 85h2v1h-2zM496 86h1v1h-1zM499 86h1v1h-1zM496 87h1v1h-1zM499 87h1v1h-1zM496 88h1v1h-1zM499 88h1v1h-1zM497 89h2v1h-2zM539 81h2v1h-2zM538 82h1v1h-1zM541 82h1v1h-1zM538 83h1v1h-1zM541 83h1v1h-1zM538 84h1v1h-1zM541 84h1v1h-1zM538 85h1v1h-1zM541 85h1v1h-1zM538 86h1v1h-1zM541 86h1v1h-1zM538 87h1v1h-1zM541 87h1v1h-1zM538 88h1v1h-1zM541 88h1v1h-1zM539 89h2v1h-2zM544 81h4v1h-4zM544 82h1v1h-1zM544 83h1v1h-1zM544 84h3v1h-3zM547 85h1v1h-1zM547 86h1v1h-1zM547 87h1v1h-1zM544 88h1v1h-1zM547 88h1v1h-1zM545 89h2v1h-2zM552 81h1v1h-1zM551 82h2v1h-2zM552 83h1v1h-1zM552 84h1v1h-1zM552 85h1v1h-1zM552 86h1v1h-1zM552 87h1v1h-1zM552 88h1v1h-1zM552 89h1v1h-1zM557 81h2v1h-2zM556 82h1v1h-1zM559 82h1v1h-1zM556 83h1v1h-1zM559 83h1v1h-1zM556 84h1v1h-1zM559 84h1v1h-1zM556 85h1v1h-1zM559 85h1v1h-1zM557 86h3v1h-3zM559 87h1v1h-1zM556 88h1v1h-1zM559 88h1v1h-1zM557 89h2v1h-2zM599 81h2v1h-2zM598 82h1v1h-1zM601 82h1v1h-1zM598 83h1v1h-1zM601 83h1v1h-1zM598 84h1v1h-1zM601 84h1v1h-1zM598 85h1v1h-1zM601 85h1v1h-1zM598 86h1v1h-1zM601 86h1v1h-1zM598 87h1v1h-1zM601 87h1v1h-1zM598 88h1v1h-1zM601 88h1v1h-1zM599 89h2v1h-2zM604 81h4v1h-4zM604 82h1v1h-1zM604 83h1v1h-1zM604 84h3v1h-3zM607 85h1v1h-1zM607 86h1v1h-1zM607 87h1v1h-1zM604 88h1v1h-1zM607 88h1v1h-1zM605 89h2v1h-2zM611 81h2v1h-2zM610 82h1v1h-1zM613 82h1v1h-1zM613 83h1v1h-1zM613 84h1v1h-1zM612 85h1v1h-1zM612 86h1v1h-1zM611 87h1v1h-1zM610 88h1v1h-1zM610 89h4v1h-4zM617 81h2v1h-2zM616 82h1v1h-1zM619 82h1v1h-1zM616 83h1v1h-1zM619 83h1v1h-1zM616 84h1v1h-1zM619 84h1v1h-1zM616 85h1v1h-1zM619 85h1v1h-1zM616 86h1v1h-1zM619 86h1v1h-1zM616 87h1v1h-1zM619 87h1v1h-1zM616 88h1v1h-1zM619 88h1v1h-1zM617 89h2v1h-2zM3 125h1v1h-1zM2 126h2v1h-2zM3 127h1v1h-1zM3 128h1v1h-1zM3 129h1v1h-1zM3 130h1v1h-1zM3 131h1v1h-1zM3 132h1v1h-1zM3 133h1v1h-1zM7 133h1v1h-1zM11 125h1v1h-1zM10 126h2v1h-2zM11 127h1v1h-1zM11 128h1v1h-1zM11 129h1v1h-1zM11 130h1v1h-1zM11 131h1v1h-1zM11 132h1v1h-1zM11 133h1v1h-1zM3 175h1v1h-1zM2 176h2v1h-2zM3 177h1v1h-1zM3 178h1v1h-1zM3 179h1v1h-1zM3 180h1v1h-1zM3 181h1v1h-1zM3 182h1v1h-1zM3 183h1v1h-1zM7 183h1v1h-1zM10 175h2v1h-2zM9 176h1v1h-1zM12 176h1v1h-1zM9 177h1v1h-1zM12 177h1v1h-1zM9 178h1v1h-1zM12 178h1v1h-1zM9 179h1v1h-1zM12 179h1v1h-1zM9 180h1v1h-1zM12 180h1v1h-1zM9 181h1v1h-1zM12 181h1v1h-1zM9 182h1v1h-1zM12 182h1v1h-1zM10 183h2v1h-2zM2 225h2v1h-2zM1 226h1v1h-1zM4 226h1v1h-1zM1 227h1v1h-1zM4 227h1v1h-1zM1 228h1v1h-1zM4 228h1v1h-1zM1 229h1v1h-1zM4 229h1v1h-1zM1 230h1v1h-1zM4 230h1v1h-1zM1 231h1v1h-1zM4 231h1v1h-1zM1 232h1v1h-1zM4 232h1v1h-1zM2 233h2v1h-2zM7 233h1v1h-1zM10 225h2v1h-2zM9 226h1v1h-1zM12 226h1v1h-1zM9 227h1v1h-1zM12 227h1v1h-1zM9 228h1v1h-1zM12 228h1v1h-1zM9 229h1v1h-1zM12 229h1v1h-1zM10 230h3v1h-3zM12 231h1v1h-1zM9 232h1v1h-1zM12 232h1v1h-1zM10 233h2v1h-2zM2 275h2v1h-2zM1 276h1v1h-1zM4 276h1v1h-1zM1 277h1v1h-1zM4 277h1v1h-1zM1 278h1v1h-1zM4 278h1v1h-1zM1 279h1v1h-1zM4 279h1v1h-1zM1 280h1v1h-1zM4 280h1v1h-1zM1 281h1v1h-1zM4 281h1v1h-1zM1 282h1v1h-1zM4 282h1v1h-1zM2 283h2v1h-2zM7 283h1v1h-1zM10 275h2v1h-2zM9 276h1v1h-1zM12 276h1v1h-1zM9 277h1v1h-1zM12 277h1v1h-1zM9 278h1v1h-1zM12 278h1v1h-1zM10 279h2v1h-2zM9 280h1v1h-1zM12 280h1v1h-1zM9 281h1v1h-1zM12 281h1v1h-1zM9 282h1v1h-1zM12 282h1v1h-1zM10 283h2v1h-2zM2 325h2v1h-2zM1 326h1v1h-1zM4 326h1v1h-1zM1 327h1v1h-1zM4 327h1v1h-1zM1 328h1v1h-1zM4 328h1v1h-1zM1 329h1v1h-1zM4 329h1v1h-1zM1 330h1v1h-1zM4 330h1v1h-1zM1 331h1v1h-1zM4 331h1v1h-1zM1 332h1v1h-1zM4 332h1v1h-1zM2 333h2v1h-2zM7 333h1v1h-1zM9 325h4v1h-4zM12 326h1v1h-1zM12 327h1v1h-1zM11 328h1v1h-1zM11 329h1v1h-1zM11 330h1v1h-1zM10 331h1v1h-1zM10 332h1v1h-1zM10 333h1v1h-1zM2 375h2v1h-2zM1 376h1v1h-1zM4 376h1v1h-1zM1 377h1v1h-1zM4 377h1v1h-1zM1 378h1v1h-1zM4 378h1v1h-1zM1 379h1v1h-1zM4 379h1v1h-1zM1 380h1v1h-1zM4 380h1v1h-1zM1 381h1v1h-1zM4 381h1v1h-1zM1 382h1v1h-1zM4 382h1v1h-1zM2 383h2v1h-2zM7 383h1v1h-1zM10 375h2v1h-2zM9 376h1v1h-1zM12 376h1v1h-1zM9 377h1v1h-1zM9 378h1v1h-1zM9 379h3v1h-3zM9 380h1v1h-1zM12 380h1v1h-1zM9 381h1v1h-1zM12 381h1v1h-1zM9 382h1v1h-1zM12 382h1v1h-1zM10 383h2v1h-2zM0 76h1v1h-1zM0 77h1v1h-1zM0 78h1v1h-1zM0 79h1v1h-1zM4 79h1v1h-1zM0 80h1v1h-1zM3 80h1v1h-1zM0 81h1v1h-1zM2 81h1v1h-1zM0 82h1v1h-1zM1 82h1v1h-1zM2 82h1v1h-1zM0 83h1v1h-1zM3 83h1v1h-1zM0 84h1v1h-1zM4 84h1v1h-1zM7 76h1v1h-1zM12 76h1v1h-1zM7 77h1v1h-1zM12 77h1v1h-1zM7 78h1v1h-1zM12 78h1v1h-1zM7 79h1v1h-1zM12 79h1v1h-1zM7 80h1v1h-1zM8 80h1v1h-1zM9 80h1v1h-1zM10 80h1v1h-1zM11 80h1v1h-1zM12 80h1v1h-1zM7 81h1v1h-1zM12 81h1v1h-1zM7 82h1v1h-1zM12 82h1v1h-1zM7 83h1v1h-1zM12 83h1v1h-1zM7 84h1v1h-1zM12 84h1v1h-1zM14 79h1v1h-1zM15 79h1v1h-1zM16 79h1v1h-1zM17 79h1v1h-1zM17 80h1v1h-1zM16 81h1v1h-1zM15 82h1v1h-1zM14 83h1v1h-1zM14 84h1v1h-1zM15 84h1v1h-1zM16 84h1v1h-1zM17 84h1v1h-1z"/>
</svg>
</body></html>
